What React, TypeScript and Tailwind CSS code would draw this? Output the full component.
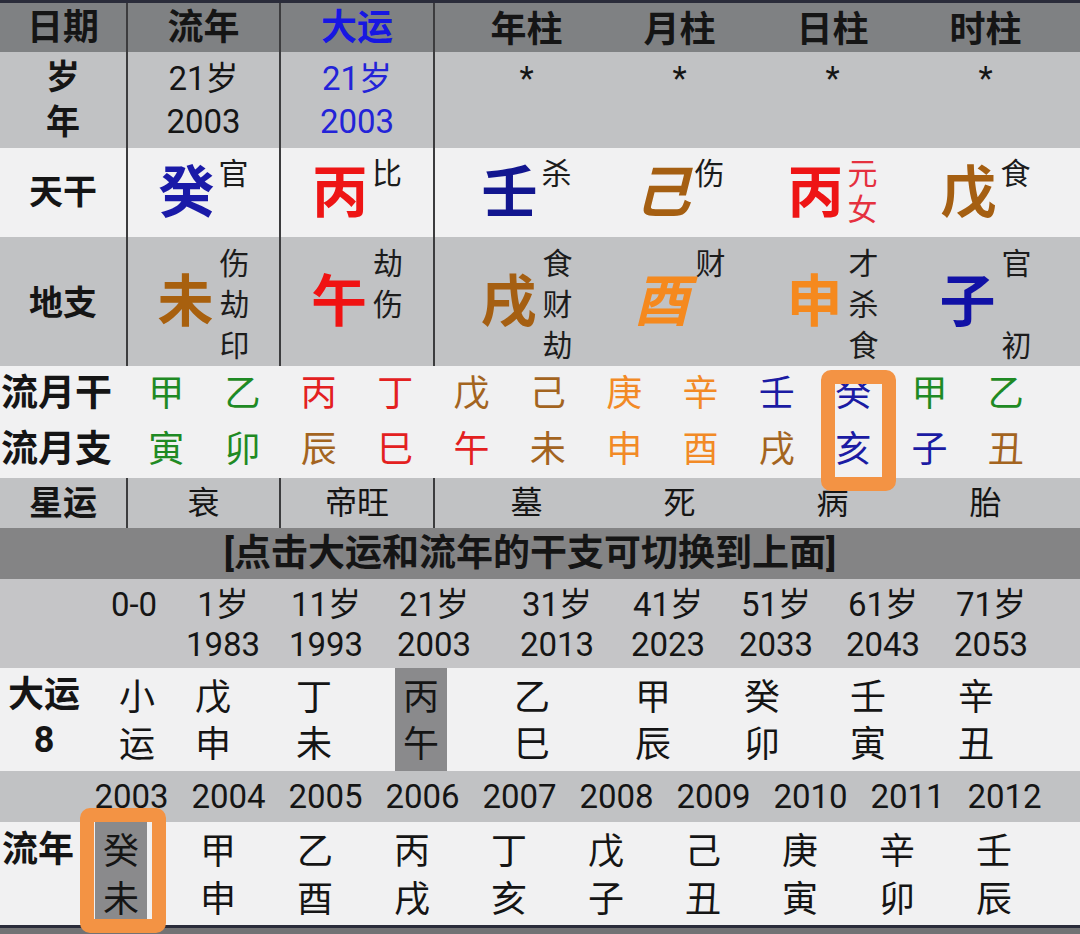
import React from 'react';

type Pillar = { ch: string; color: string; italic?: boolean; side: string[]; sideColor?: string };

const DIV = 'w-[2px] bg-[#3c3c3e]';

const stems: Pillar[] = [
  { ch: '癸', color: 'text-[#1a1aa8]', side: ['官'] },
  { ch: '丙', color: 'text-[#ee1515]', side: ['比'] },
  { ch: '壬', color: 'text-[#12168f]', side: ['杀'] },
  { ch: '己', color: 'text-[#a55f12]', italic: true, side: ['伤'] },
  { ch: '丙', color: 'text-[#ee1515]', side: ['元', '女'], sideColor: 'text-[#e5303e]' },
  { ch: '戊', color: 'text-[#a55f12]', side: ['食'] },
];

const branches: Pillar[] = [
  { ch: '未', color: 'text-[#a8600e]', side: ['伤', '劫', '印'] },
  { ch: '午', color: 'text-[#f01212]', side: ['劫', '伤', ''] },
  { ch: '戌', color: 'text-[#a55f12]', side: ['食', '财', '劫'] },
  { ch: '酉', color: 'text-[#f5891e]', italic: true, side: ['财', '', ''] },
  { ch: '申', color: 'text-[#f5891e]', side: ['才', '杀', '食'] },
  { ch: '子', color: 'text-[#1111a6]', side: ['官', '', '初'] },
];

const G = 'text-[#1f8a24]';
const R = 'text-[#e3201f]';
const B = 'text-[#a3641f]';
const O = 'text-[#f28a26]';
const U = 'text-[#1b1ba3]';

const monthStems: [string, string][] = [
  ['甲', G], ['乙', G], ['丙', R], ['丁', R], ['戊', B], ['己', B],
  ['庚', O], ['辛', O], ['壬', U], ['癸', U], ['甲', G], ['乙', G],
];
const monthBranches: [string, string][] = [
  ['寅', G], ['卯', G], ['辰', B], ['巳', R], ['午', R], ['未', B],
  ['申', O], ['酉', O], ['戌', B], ['亥', U], ['子', U], ['丑', B],
];

const ages = [
  { a: '0-0', y: '', ml: 'ml-[91px]' },
  { a: '1岁', y: '1983', ml: 'ml-[3px]' },
  { a: '11岁', y: '1993', ml: 'ml-[17px]' },
  { a: '21岁', y: '2003', ml: 'ml-[22px]' },
  { a: '31岁', y: '2013', ml: 'ml-[37px]' },
  { a: '41岁', y: '2023', ml: 'ml-[25px]' },
  { a: '51岁', y: '2033', ml: 'ml-[22px]' },
  { a: '61岁', y: '2043', ml: 'ml-[21px]' },
  { a: '71岁', y: '2053', ml: 'ml-[22px]' },
];

const dayun = [
  { t: '小', b: '运', ml: 'ml-[23px]' },
  { t: '戊', b: '申', ml: 'ml-[24px]' },
  { t: '丁', b: '未', ml: 'ml-[49px]' },
  { t: '丙', b: '午', ml: 'ml-[55px]', on: true },
  { t: '乙', b: '巳', ml: 'ml-[59px]' },
  { t: '甲', b: '辰', ml: 'ml-[69px]' },
  { t: '癸', b: '卯', ml: 'ml-[57px]' },
  { t: '壬', b: '寅', ml: 'ml-[54px]' },
  { t: '辛', b: '丑', ml: 'ml-[56px]' },
];

const years = ['2003', '2004', '2005', '2006', '2007', '2008', '2009', '2010', '2011', '2012'];
const liunian = [
  ['癸', '未'], ['甲', '申'], ['乙', '酉'], ['丙', '戌'], ['丁', '亥'],
  ['戊', '子'], ['己', '丑'], ['庚', '寅'], ['辛', '卯'], ['壬', '辰'],
];

function TopRow({ cls, align, cells }: { cls: string; align: string; cells: React.ReactNode[] }) {
  return (
    <div className={`flex ${cls}`}>
      <div className={`w-[126px] flex justify-center ${align}`}>{cells[0]}</div>
      <div className={DIV} />
      <div className={`w-[151px] flex justify-center ${align}`}>{cells[1]}</div>
      <div className={DIV} />
      <div className={`w-[152px] flex justify-center ${align}`}>{cells[2]}</div>
      <div className={DIV} />
      <div className="flex-1 grid grid-cols-4 pl-[15px] pr-[18px]">
        {cells.slice(3).map((c, i) => (
          <div key={i} className={`flex justify-center ${align}`}>{c}</div>
        ))}
      </div>
    </div>
  );
}

const Stem = ({ p }: { p: Pillar }) => (
  <div className="flex items-start gap-1">
    <span className={`mt-[17px] text-[56px] leading-[56px] font-bold ${p.color} ${p.italic ? 'italic' : ''}`}>{p.ch}</span>
    <div className={`mt-[8px] flex flex-col text-[30px] leading-[36px] ${p.sideColor ?? 'text-[#1c1c1c]'}`}>
      {p.side.map((s, i) => <span key={i}>{s}</span>)}
    </div>
  </div>
);

const Branch = ({ p }: { p: Pillar }) => (
  <div className="flex items-start gap-[6px]">
    <span className={`mt-[37px] text-[56px] leading-[56px] font-bold ${p.color} ${p.italic ? 'italic' : ''}`}>{p.ch}</span>
    <div className="mt-[6px] flex flex-col w-[30px] text-[30px] leading-[41px] text-[#1c1c1c]">
      {p.side.map((s, i) => <span key={i} className="h-[41px]">{s}</span>)}
    </div>
  </div>
);

const Two = ({ a, b, cls }: { a: string; b: string; cls: string }) => (
  <div className={`flex flex-col items-center ${cls}`}>
    <span>{a}</span>
    <span>{b || '\u00a0'}</span>
  </div>
);

export default function App() {
  const head = ['日期', '流年', '大运', '年柱', '月柱', '日柱', '时柱'];
  const xing = ['星运', '衰', '帝旺', '墓', '死', '病', '胎'];

  return (
    <div className="relative w-[1080px] h-[934px] overflow-hidden flex flex-col bg-[#727274] text-[#151515] font-[family-name:Roboto,'Noto_Sans_CJK_SC',sans-serif]">
      <div className="h-[3px] bg-[#2a2c3a]" />

      <TopRow
        cls="h-[49px] bg-[#7f8183] text-[36px] font-bold"
        align="items-center"
        cells={head.map((h, i) => (
          <span key={h} className={i === 2 ? 'text-[#1717e2]' : ''}>{h}</span>
        ))}
      />

      <TopRow
        cls="h-[96px] bg-[#c1c2c4]"
        align="items-center"
        cells={[
          <Two key="l" a="岁" b="年" cls="text-[34px] leading-[45px] font-bold" />,
          <Two key="a" a="21岁" b="2003" cls="text-[33px] leading-[43px]" />,
          <Two key="b" a="21岁" b="2003" cls="text-[33px] leading-[43px] text-[#2323d8]" />,
          ...[0, 1, 2, 3].map((i) => <Two key={i} a="*" b="" cls="text-[33px] leading-[43px]" />),
        ]}
      />

      <TopRow
        cls="h-[89px] bg-[#f1f1f2]"
        align="items-start"
        cells={[
          <span key="l" className="mt-[26px] text-[34px] leading-[36px] font-bold">天干</span>,
          ...stems.map((p, i) => <Stem key={i} p={p} />),
        ]}
      />

      <TopRow
        cls="h-[129px] bg-[#c1c2c4]"
        align="items-start"
        cells={[
          <span key="l" className="mt-[48px] text-[34px] leading-[36px] font-bold">地支</span>,
          ...branches.map((p, i) => <Branch key={i} p={p} />),
        ]}
      />

      <div className="h-[112px] bg-[#f1f1f2] flex">
        <div className="w-[128px] flex flex-col pl-[1px] text-[37px] leading-[56px] font-bold">
          <span>流月干</span>
          <span>流月支</span>
        </div>
        <div className="w-[916px] grid grid-cols-12 text-[36px] leading-[56px]">
          {monthStems.map(([c, col], i) => (
            <div key={i} className="flex flex-col items-center">
              <span className={col}>{c}</span>
              <span className={monthBranches[i][1]}>{monthBranches[i][0]}</span>
            </div>
          ))}
        </div>
      </div>

      <TopRow
        cls="h-[50px] bg-[#c1c2c4] text-[32px]"
        align="items-center"
        cells={xing.map((x, i) => (
          <span key={i} className={i === 0 ? 'text-[34px] font-bold' : ''}>{x}</span>
        ))}
      />

      <div className="h-[51px] bg-[#848485] flex items-center justify-center pr-[20px] text-[37px] font-bold">
        [点击大运和流年的干支可切换到上面]
      </div>

      <div className="h-[89px] bg-[#c5c5c7] flex items-start pt-[6px] text-[33px] leading-[40px]">
        {ages.map((g) => (
          <div key={g.a} className={`w-[86px] ${g.ml}`}>
            <Two a={g.a} b={g.y} cls="" />
          </div>
        ))}
      </div>

      <div className="h-[103px] bg-[#f1f1f2] flex">
        <div className="w-[88px] pt-[5px] flex flex-col items-center text-[36px] leading-[45px] font-bold">
          <span>大运</span>
          <span>8</span>
        </div>
        {dayun.map((d) => (
          <div
            key={d.t}
            className={`w-[52px] pt-[7px] flex flex-col items-center text-[36px] leading-[47px] ${d.ml} ${d.on ? 'bg-[#8a8a8c]' : ''}`}
          >
            <span>{d.t}</span>
            <span>{d.b}</span>
          </div>
        ))}
      </div>

      <div className="h-[51px] bg-[#c1c2c4] flex items-center pl-[83px] text-[33px]">
        {years.map((y) => (
          <div key={y} className="w-[97px] text-center">{y}</div>
        ))}
      </div>

      <div className="h-[103px] bg-[#f1f1f2] flex">
        <div className="w-[83px] pt-[4px] pl-[2px] text-[36px] leading-[48px] font-bold">流年</div>
        {liunian.map(([t, b], i) => (
          <div key={i} className="w-[97px] flex">
            <div className={`ml-[12px] w-[52px] pt-[6px] flex flex-col items-center text-[36px] leading-[48px] ${i === 0 ? 'bg-[#8a8a8c]' : ''}`}>
              <span>{t}</span>
              <span>{b}</span>
            </div>
          </div>
        ))}
      </div>

      <div className="h-[3px] bg-[#2a2c3a]" />

      <div className="absolute left-[821px] top-[370px] w-[75px] h-[121px] rounded-[10px] border-[14px] border-[#f39344]" />
      <div className="absolute left-[80px] top-[808px] w-[86px] h-[125px] rounded-[10px] border-[14px] border-[#f39344]" />
    </div>
  );
}
